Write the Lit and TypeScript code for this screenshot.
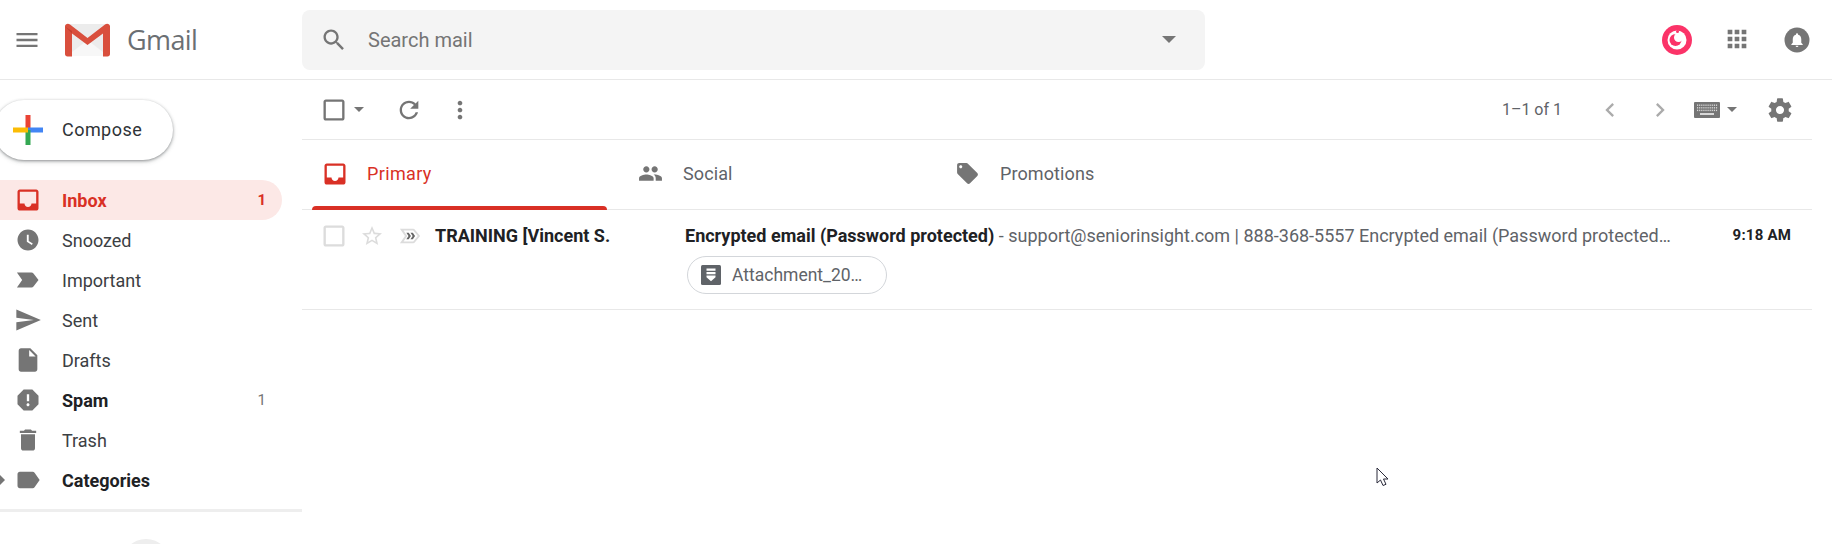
import { LitElement, html, css, svg } from "lit";
import { customElement } from "lit/decorators.js";

const P = {
  menu: "M3 18h18v-2H3v2zm0-5h18v-2H3v2zm0-7v2h18V6H3z",
  search: "M15.5 14h-.79l-.28-.27C15.41 12.59 16 11.11 16 9.5 16 5.91 13.09 3 9.5 3S3 5.91 3 9.5 5.91 16 9.5 16c1.61 0 3.09-.59 4.23-1.57l.27.28v.79l5 4.99L20.49 19l-4.99-5zm-6 0C7.01 14 5 11.99 5 9.5S7.01 5 9.5 5 14 7.01 14 9.5 11.99 14 9.5 14z",
  inbox: "M19 3H4.99c-1.11 0-1.98.89-1.98 2L3 19c0 1.1.88 2 1.99 2H19c1.1 0 2-.9 2-2V5c0-1.11-.9-2-2-2zm0 12h-4c0 1.66-1.35 3-3 3s-3-1.34-3-3H4.99V5H19v10z",
  clock: "M11.99 3C7.02 3 3 7.03 3 12s4.02 9 8.99 9C16.97 21 21 16.97 21 12s-4.03-9-9.01-9zM15.3 16.2L11 13.6V7.5h1.6v5.3l3.5 2.1-.8 1.3z",
  important: "M2.5 18.5 7 12 2.5 5.5H15c.7 0 1.3.3 1.7.9L21 12l-4.3 5.6c-.4.6-1 .9-1.7.9z",
  sent: "M2.01 21L23 12 2.01 3 2 10l15 2-15 2z",
  draft: "M6 2c-1.1 0-1.99.9-1.99 2L4 20c0 1.1.89 2 1.99 2H18c1.1 0 2-.9 2-2V8l-6-6H6zm7 7V3.5L18.5 9H13z",
  spam: "M15.73 3H8.27L3 8.27v7.46L8.27 21h7.46L21 15.73V8.27L15.73 3zM12 17.3c-.72 0-1.3-.58-1.3-1.3 0-.72.58-1.3 1.3-1.3.72 0 1.3.58 1.3 1.3 0 .72-.58 1.3-1.3 1.3zm1-4.3h-2V7h2v6z",
  trash: "M6 19c0 1.1.9 2 2 2h8c1.1 0 2-.9 2-2V7H6v12zM19 4h-3.5l-1-1h-5l-1 1H5v2h14V4z",
  label: "M17.63 5.84C17.27 5.33 16.67 5 16 5L5 5.01C3.9 5.01 3 5.9 3 7v10c0 1.1.9 1.99 2 1.99L16 19c.67 0 1.27-.33 1.63-.84L22 12l-4.37-6.16z",
  refresh: "M17.65 6.35C16.2 4.9 14.21 4 12 4c-4.42 0-7.99 3.58-7.99 8s3.57 8 7.99 8c3.73 0 6.84-2.55 7.73-6h-2.08c-.82 2.33-3.04 4-5.65 4-3.31 0-6-2.69-6-6s2.69-6 6-6c1.66 0 3.14.69 4.22 1.78L13 11h7V4l-2.35 2.35z",
  more: "M12 8c1.1 0 2-.9 2-2s-.9-2-2-2-2 .9-2 2 .9 2 2 2zm0 2c-1.1 0-2 .9-2 2s.9 2 2 2 2-.9 2-2-.9-2-2-2zm0 6c-1.1 0-2 .9-2 2s.9 2 2 2 2-.9 2-2-.9-2-2-2z",
  people: "M16 11c1.66 0 2.99-1.34 2.99-3S17.66 5 16 5c-1.66 0-3 1.34-3 3s1.34 3 3 3zm-8 0c1.66 0 2.99-1.34 2.99-3S9.66 5 8 5C6.34 5 5 6.34 5 8s1.34 3 3 3zm0 2c-2.33 0-7 1.17-7 3.5V19h14v-2.5c0-2.33-4.67-3.5-7-3.5zm8 0c-.29 0-.62.02-.97.05 1.16.84 1.97 1.97 1.97 3.45V19h6v-2.5c0-2.33-4.67-3.5-7-3.5z",
  tag: "M21.41 11.58l-9-9C12.05 2.22 11.55 2 11 2H4c-1.1 0-2 .9-2 2v7c0 .55.22 1.05.59 1.42l9 9c.36.36.86.58 1.41.58.55 0 1.05-.22 1.41-.59l7-7c.37-.36.59-.86.59-1.41 0-.55-.23-1.06-.59-1.42zM5.5 7C4.67 7 4 6.33 4 5.5S4.67 4 5.5 4 7 4.67 7 5.5 6.33 7 5.5 7z",
  gear: "M19.43 12.98c.04-.32.07-.64.07-.98s-.03-.66-.07-.98l2.11-1.65c.19-.15.24-.42.12-.64l-2-3.46c-.12-.22-.39-.3-.61-.22l-2.49 1c-.52-.4-1.08-.73-1.69-.98l-.38-2.65C14.46 2.18 14.25 2 14 2h-4c-.25 0-.46.18-.49.42l-.38 2.65c-.61.25-1.17.59-1.69.98l-2.49-1c-.23-.09-.49 0-.61.22l-2 3.46c-.13.22-.07.49.12.64l2.11 1.65c-.04.32-.07.65-.07.98s.03.66.07.98l-2.11 1.65c-.19.15-.24.42-.12.64l2 3.46c.12.22.39.3.61.22l2.49-1c.52.4 1.08.73 1.69.98l.38 2.65c.03.24.24.42.49.42h4c.25 0 .46-.18.49-.42l.38-2.65c.61-.25 1.17-.59 1.69-.98l2.49 1c.23.09.49 0 .61-.22l2-3.46c.12-.22.07-.49-.12-.64l-2.11-1.65zM12 15.5c-1.93 0-3.5-1.57-3.5-3.5s1.57-3.5 3.5-3.5 3.5 1.57 3.5 3.5-1.57 3.5-3.5 3.5z",
  apps: "M4 8h4V4H4v4zm6 12h4v-4h-4v4zm-6 0h4v-4H4v4zm0-6h4v-4H4v4zm6 0h4v-4h-4v4zm6-10v4h4V4h-4zm-6 4h4V4h-4v4zm6 6h4v-4h-4v4zm0 6h4v-4h-4v4z",
  left: "M15.41 7.41L14 6l-6 6 6 6 1.41-1.41L10.83 12z",
  right: "M10 6L8.59 7.41 13.17 12l-4.58 4.59L10 18l6-6z",
  bell: "M12 22a2 2 0 0 0 2-2h-4a2 2 0 0 0 2 2zm6-6v-5c0-3.07-1.63-5.64-4.5-6.32V4a1.5 1.5 0 0 0-3 0v.68C7.64 5.36 6 7.92 6 11v5l-2 2v1h16v-1l-2-2z",
};

const icon = (d: string, cls = "i28") => html`<svg class=${cls} viewBox="0 0 24 24"><path d=${d}></path></svg>`;

const NAV = [
  { p: P.inbox, t: "Inbox", n: "1", cls: "active" },
  { p: P.clock, t: "Snoozed", n: "", cls: "" },
  { p: P.important, t: "Important", n: "", cls: "" },
  { p: P.sent, t: "Sent", n: "", cls: "" },
  { p: P.draft, t: "Drafts", n: "", cls: "" },
  { p: P.spam, t: "Spam", n: "1", cls: "bold" },
  { p: P.trash, t: "Trash", n: "", cls: "" },
  { p: P.label, t: "Categories", n: "", cls: "bold arrow" },
];

@customElement("app-root")
export class AppRoot extends LitElement {
  static styles = css`
    :host { display: block; position: relative; width: 1832px; height: 544px; overflow: hidden; background: #fff; font-family: Roboto, "Liberation Sans", sans-serif; color: #202124; }
    svg { display: block; flex: none; fill: #757575; }
    .i28 { width: 28px; height: 28px; }
    .header { display: flex; align-items: center; height: 79px; border-bottom: 1px solid #e8e8e8; }
    .brand { display: flex; align-items: center; width: 302px; flex: none; padding-left: 13px; box-sizing: border-box; }
    .logo { width: 47px; height: 36px; margin-left: 23px; }
    .wordmark { font-family: "Open Sans", sans-serif; font-size: 27px; color: #6b6f73; margin-left: 16px; letter-spacing: -0.6px; }
    .search { display: flex; align-items: center; width: 903px; height: 60px; background: #f4f4f4; border-radius: 8px; padding-left: 18px; box-sizing: border-box; }
    .search span { margin-left: 20px; flex: 1; font-size: 20px; color: #757575; }
    .caret { width: 0; height: 0; border-left: 7px solid transparent; border-right: 7px solid transparent; border-top: 7px solid #757575; flex: none; }
    .search .caret { margin-right: 29px; }
    .hright { display: flex; align-items: center; margin-left: auto; padding-right: 22px; }
    .pink { width: 30px; height: 30px; margin-right: 31px; }
    .bell { width: 26px; height: 26px; margin-left: 33px; }
    .apps { width: 28px; height: 28px; margin-top: -2px; margin-left: 0; }
    .body { display: flex; }
    .side { width: 302px; flex: none; padding-top: 20px; position: relative; }
    .compose { display: flex; align-items: center; margin-left: -6px; width: 179px; height: 60px; border-radius: 30px; background: #fff; box-sizing: border-box; padding-left: 18px; box-shadow: 0 1px 3px rgba(60,64,67,.5), 0 2px 5px rgba(60,64,67,.15); font-size: 18px; font-weight: 400; color: #2f3337; letter-spacing: .45px; padding-bottom: 1px; }
    .plus { width: 32px; height: 32px; margin-right: 18px; }
    .nav { margin-top: 20px; display: flex; flex-direction: column; }
    .item { display: flex; align-items: center; width: 282px; height: 40px; box-sizing: border-box; padding: 0 16px 0 14px; border-radius: 0 20px 20px 0; font-size: 18px; color: #3c4043; position: relative; }
    .item span.t { margin-left: 20px; flex: 1; }
    .item .n { font-size: 15px; color: #757575; }
    .item.bold .t { font-weight: 700; color: #202124; }
    .item.active { background: #fce8e6; }
    .item.active svg { fill: #d93025; }
    .item.active .t { font-weight: 700; color: #d93025; }
    .item.active .n { color: #d93025; font-weight: 700; }
    .item.arrow::before { content: ""; position: absolute; left: 0; top: 15px; border-left: 5px solid #757575; border-top: 5px solid transparent; border-bottom: 5px solid transparent; }
    .rule { height: 3px; background: #eee; margin-top: 9px; }
    .avatar { width: 48px; height: 48px; border-radius: 50%; background: #eee; margin: 27px 0 0 122px; }
    .main { flex: 1; margin-right: 20px; min-width: 0; }
    .toolbar { display: flex; align-items: center; height: 59px; border-bottom: 1px solid #e8e8e8; }
    .toolbar .i28 { flex: none; }
    .cb { width: 28px; margin-left: 18px; }
    .toolbar .caret { border-left-width: 5.5px; border-right-width: 5.5px; border-top-width: 5.5px; }
    .c1 { margin-left: 6px; }
    .refresh { margin-left: 31px; }
    .more { margin-left: 23px; }
    .pager { margin-left: auto; font-size: 16px; color: #5f6368; }
    .nav-l { margin-left: 34px; opacity: .6; }
    .nav-r { margin-left: 22px; opacity: .6; }
    .kbd { margin-left: 20px; width: 26px; height: 16px; }
    .c2 { margin-left: 7px; }
    .gear { margin-left: 29px; margin-right: 18px; }
    .tabs { display: flex; height: 69px; border-bottom: 1px solid #e8e8e8; position: relative; }
    .tab { width: 316px; box-sizing: border-box; display: flex; align-items: center; padding-left: 9px; font-size: 18px; color: #5f6368; font-weight: 400; position: relative; letter-spacing: .1px; padding-bottom: 2px; }
    .tab svg { width: 25px; height: 25px; }
    .tab span { margin-left: 20px; }
    .tab + .tab + .tab svg { margin-left: 1px; }
    .tab.on { color: #d93025; margin-left: 10px; width: 295px; margin-right: 22px; padding-left: 8.5px; letter-spacing: .35px; }
    .tab.on svg { fill: #d93025; width: 28px; height: 28px; }
    .tab.on span { margin-left: 18.5px; }
    .tab.on::after { content: ""; position: absolute; left: 0; right: 0; bottom: -1px; height: 4px; background: #d93025; border-radius: 4px 4px 0 0; }
    .row { height: 100px; box-sizing: border-box; padding-top: 4px; border-bottom: 1px solid #e8e8e8; display: flex; align-items: flex-start; position: relative; }
    .rc { display: flex; align-items: center; height: 44px; margin-left: 18px; width: 115px; flex: none; }
    .rc svg { fill: #dcdcdc; }
    .r-star { margin-left: 12px; width: 24px; height: 24px; }
    .r-imp { margin-left: 15px; width: 22px; height: 22px; }
    .sender { flex: none; width: 250px; height: 44px; line-height: 44px; font-size: 18px; font-weight: 700; }
    .content { flex: 1; min-width: 0; }
    .line { height: 44px; line-height: 44px; font-size: 18px; white-space: nowrap; color: #5f6368; }
    .line b { color: #202124; font-weight: 700; }
    .chip { display: flex; align-items: center; box-sizing: border-box; width: 200px; height: 38px; margin: -2px 0 0 2px; border: 1px solid #d3d6da; border-radius: 19px; padding-left: 11px; font-size: 17.5px; color: #5f6368; }
    .chip span { margin-left: 9px; }
    .doc { width: 24px; height: 24px; }
    .time { flex: none; width: 78px; margin-right: 21px; height: 42px; line-height: 42px; text-align: right; font-size: 15px; font-weight: 700; letter-spacing: .2px; }
    .cursor { position: absolute; left: 1376px; top: 467px; width: 14px; height: 20px; }
  `;

  render() {
    return html`
      <div class="header">
        <div class="brand">
          ${icon(P.menu)}
          <svg class="logo" viewBox="0 0 47 36">
            <path d="M3 2h41v32H3z" fill="#ececec"></path>
            <path d="M3 34 23.5 18 44 34z" fill="#f7f7f7"></path>
            <path d="M1 4.5C1 2 4 1 6 2.5L23.500 16 41 2.500C43 1 46 2 46 4.500V32c0 1.500-1 2.500-2.500 2.500H39V11.500L23.500 23 8 11.500V34.500H3.500C2 34.500 1 33.500 1 32z" fill="#d94f3d"></path>
            <path d="M1 4.500 8 11.500V9z" fill="#c4402f"></path>
          </svg>
          <span class="wordmark">Gmail</span>
        </div>
        <div class="search">
          ${icon(P.search)}
          <span>Search mail</span>
          <div class="caret"></div>
        </div>
        <div class="hright">
          <svg class="pink" viewBox="0 0 30 30">
            <circle cx="15" cy="15" r="15" fill="#fb3368"></circle>
            <circle cx="15" cy="15" r="9.500" fill="#fff"></circle>
            <circle cx="13.500" cy="15" r="6" fill="#fb3368"></circle>
            <circle cx="16.500" cy="12.500" r="4.500" fill="#fff"></circle>
            <circle cx="15.500" cy="6.500" r="1.500" fill="#fb3368"></circle>
          </svg>
          <svg class="apps" viewBox="0 0 24 24"><path d=${P.apps}></path></svg>
          <svg class="bell" viewBox="0 0 26 26">
            <circle cx="13" cy="13" r="12.500" fill="#757575"></circle>
            <g transform="translate(4.500 4.500) scale(.71)"><path d=${P.bell} fill="#fff"></path></g>
          </svg>
        </div>
      </div>
      <div class="body">
        <div class="side">
          <div class="compose">
            <svg class="plus" viewBox="0 0 32 32">
              <rect x="13.500" y="1" width="5" height="15" fill="#ea4335"></rect>
              <rect x="16" y="13.500" width="15" height="5" fill="#4285f4"></rect>
              <rect x="13.500" y="16" width="5" height="15" fill="#34a853"></rect>
              <rect x="1" y="13.500" width="15" height="5" fill="#fbbc05"></rect>
            </svg>
            Compose
          </div>
          <div class="nav">
            ${NAV.map(
              (n) => html`<div class="item ${n.cls}">${icon(n.p)}<span class="t">${n.t}</span>${n.n ? html`<span class="n">${n.n}</span>` : ""}</div>`
            )}
          </div>
          <div class="rule"></div>
          <div class="avatar"></div>
        </div>
        <div class="main">
          <div class="toolbar">
            <svg class="i28 cb" viewBox="0 0 24 24"><path d="M19 5v14H5V5h14m0-2H5c-1.100 0-2 .9-2 2v14c0 1.100.9 2 2 2h14c1.100 0 2-.9 2-2V5c0-1.100-.9-2-2-2z"></path></svg>
            <div class="caret c1"></div>
            <svg class="i28 refresh" viewBox="0 0 24 24"><path d=${P.refresh}></path></svg>
            <svg class="i28 more" viewBox="0 0 24 24"><path d=${P.more}></path></svg>
            <span class="pager">1–1 of 1</span>
            <svg class="i28 nav-l" viewBox="0 0 24 24"><path d=${P.left}></path></svg>
            <svg class="i28 nav-r" viewBox="0 0 24 24"><path d=${P.right}></path></svg>
            <svg class="kbd" viewBox="0 0 26 16">
              <rect width="26" height="16" rx="1" fill="#757575"></rect>
              <g fill="#d8d8d8">
                ${[0, 1, 2].map((r) =>
                  [0, 1, 2, 3, 4, 5, 6, 7, 8, 9].map((c) => svg`<rect x=${3 + c * 2.1} y=${2.5 + r * 2.6} width="1.200" height="1.400"></rect>`)
                )}
                <rect x="6" y="11" width="14" height="2"></rect>
              </g>
            </svg>
            <div class="caret c2"></div>
            <svg class="i28 gear" viewBox="0 0 24 24"><path d=${P.gear}></path></svg>
          </div>
          <div class="tabs">
            <div class="tab on">${icon(P.inbox)}<span>Primary</span></div>
            <div class="tab">${icon(P.people)}<span>Social</span></div>
            <div class="tab">${icon(P.tag)}<span>Promotions</span></div>
          </div>
          <div class="row">
            <div class="rc">
              <svg class="i28" viewBox="0 0 24 24"><path d="M19 5v14H5V5h14m0-2H5c-1.100 0-2 .9-2 2v14c0 1.100.9 2 2 2h14c1.100 0 2-.9 2-2V5c0-1.100-.9-2-2-2z"></path></svg>
              <svg class="r-star" viewBox="0 0 24 24"><path d="M22 9.240l-7.190-.62L12 2 9.190 8.630 2 9.240l5.460 4.730L5.820 21 12 17.270 18.180 21l-1.630-7.030L22 9.240zM12 15.400l-3.760 2.270 1-4.280-3.320-2.880 4.380-.38L12 6.100l1.710 4.040 4.380.38-3.320 2.880 1 4.280L12 15.400z"></path></svg>
              <svg class="r-imp" viewBox="0 0 24 24">
                <path fill-rule="evenodd" d="M1 20 6.500 12 1 4H15.500c.7 0 1.300.3 1.700.9L23 12l-5.800 7.100c-.4.600-1 .9-1.700.9zM5 6l4 6-4 6h10.500l5-6-5-6z"></path>
                <path d="M8 8.500h2.600l2.400 3.500-2.400 3.500H8l2.400-3.500zM12.500 8.500h2.600l2.400 3.500-2.400 3.500h-2.600l2.400-3.500z" fill="#666"></path>
              </svg>
            </div>
            <div class="sender">TRAINING [Vincent S.</div>
            <div class="content">
              <div class="line"><b>Encrypted email (Password protected)</b> - support@seniorinsight.com | 888-368-5557 Encrypted email (Password protected…</div>
              <div class="chip">
                <svg class="doc" viewBox="0 0 24 24">
                  <rect x="2" y="2" width="20" height="20" rx="1.500" fill="#5f6368"></rect>
                  <path d="M7.500 5.500h9v2.200h-9zM7.500 9h9v2.200h-9zM7.500 12.500h9v1.800l-4.500 4-4.500-4z" fill="#fff"></path>
                </svg>
                <span>Attachment_20…</span>
              </div>
            </div>
            <div class="time">9:18 AM</div>
          </div>
        </div>
      </div>
      <svg class="cursor" viewBox="0 0 14 20">
        <path d="M1 1v15l3.500-3 2.500 5.500 3-1.200-2.500-5.300H12z" fill="#fff" stroke="#2a2a3a" stroke-width="1"></path>
      </svg>
    `;
  }
}
